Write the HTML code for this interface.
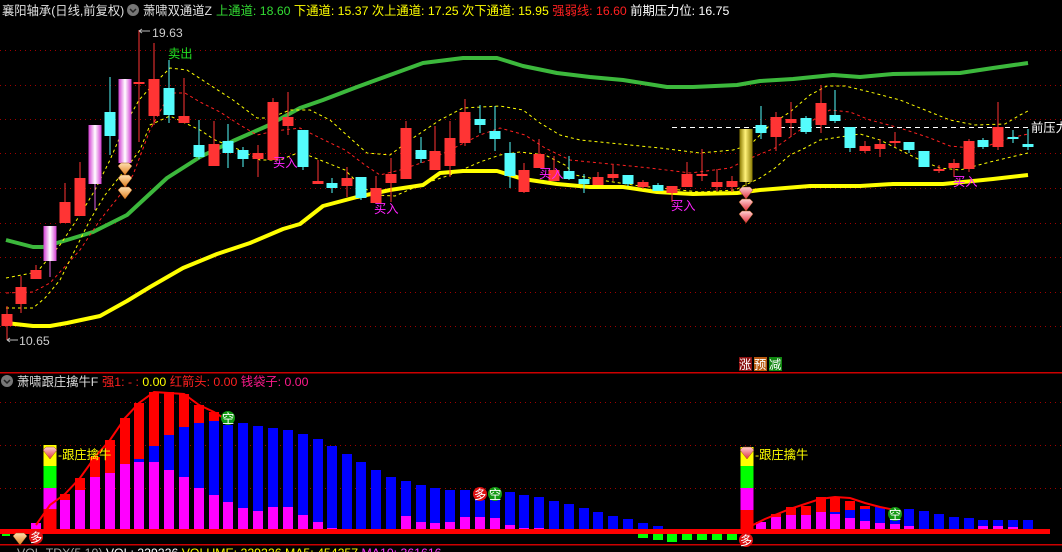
<!DOCTYPE html>
<html><head><meta charset="utf-8">
<style>
html,body{margin:0;padding:0;background:#000;width:1062px;height:552px;overflow:hidden}
svg{display:block}
text{font-family:"Liberation Sans","Noto Sans CJK SC",sans-serif;font-size:12.3px}
</style></head>
<body>
<svg id="s" width="1062" height="552" viewBox="0 0 1062 552" xmlns="http://www.w3.org/2000/svg">
<defs>
<linearGradient id="pk" x1="0" x2="1" y1="0" y2="0">
<stop offset="0" stop-color="#d23cd2"/><stop offset="0.5" stop-color="#ffffff"/><stop offset="1" stop-color="#d23cd2"/></linearGradient>
<linearGradient id="gd" x1="0" x2="1" y1="0" y2="0">
<stop offset="0" stop-color="#8a7a00"/><stop offset="0.45" stop-color="#fff27a"/><stop offset="1" stop-color="#8a7a00"/></linearGradient>
<linearGradient id="dmo" x1="0" x2="0" y1="0" y2="1"><stop offset="0" stop-color="#ffe0b0"/><stop offset="1" stop-color="#e08020"/></linearGradient>
<linearGradient id="dmr" x1="0" x2="0" y1="0" y2="1"><stop offset="0" stop-color="#ffd0d0"/><stop offset="1" stop-color="#e03040"/></linearGradient>
</defs>
<g id="grid"></g>
<g id="lines"></g>
<g id="candles"></g>
<g id="low"></g>
<!-- header -->
<text x="2" y="15" fill="#e0e0e0">襄阳轴承(日线,前复权)</text>
<circle cx="133" cy="10" r="6" fill="#777"/><path d="M130 9 l3 3 l3 -3" stroke="#222" stroke-width="1.5" fill="none"/>
<text x="143" y="15" fill="#e0e0e0">萧啸双通道Z</text>
<text x="216" y="15"><tspan fill="#33dd33">上通道: 18.60 </tspan><tspan fill="#ffff00">下通道: 15.37 次上通道: 17.25 次下通道: 15.95 </tspan><tspan fill="#ff2020">强弱线: 16.60 </tspan><tspan fill="#ffffff">前期压力位: 16.75</tspan></text>
<!-- price labels -->
<path d="M139 31 L150 31 M139 31 l3 -2 M139 31 l3 2" stroke="#bbb" stroke-width="1"/>
<text x="152" y="37" fill="#cccccc" font-size="12">19.63</text>
<path d="M7 340 L18 340 M7 340 l3 -2 M7 340 l3 2" stroke="#bbb" stroke-width="1"/>
<text x="19" y="345" fill="#cccccc" font-size="12">10.65</text>
<text x="168" y="58" fill="#22dd22">卖出</text>
<g fill="#ff22ff">
<text x="273" y="167">买入</text><text x="374" y="213">买入</text><text x="539" y="178">买入</text><text x="671" y="210">买入</text><text x="953" y="186">买入</text>
</g>
<text x="1031" y="132" fill="#ffffff">前压力</text>
<!-- 涨预减 -->
<rect x="739" y="357" width="13" height="14" fill="#8b1010"/><text x="739" y="369" fill="#fff" font-size="12">涨</text>
<rect x="754" y="357" width="13" height="14" fill="#b85a10"/><text x="754" y="369" fill="#fff" font-size="12">预</text>
<rect x="769" y="357" width="13" height="14" fill="#118811"/><text x="769" y="369" fill="#fff" font-size="12">减</text>
<rect x="0" y="372" width="1062" height="1.5" fill="#cc0000"/>
<circle cx="7" cy="381" r="6" fill="#777"/><path d="M4 380 l3 3 l3 -3" stroke="#222" stroke-width="1.5" fill="none"/>
<text x="17" y="386" fill="#dddddd">萧啸跟庄擒牛F</text>
<text x="102" y="386"><tspan fill="#ff2020">强1: - : </tspan><tspan fill="#ffff00">0.00 </tspan><tspan fill="#ff2020">红箭头: 0.00 </tspan><tspan fill="#ff1a8c">钱袋子: 0.00</tspan></text>
<rect x="0" y="544" width="1062" height="1.5" fill="#cc0000"/>
<text x="17" y="557" fill="#aaaaaa">VOL-TDX(5,10) <tspan fill="#fff">VOL: 229226 </tspan><tspan fill="#ffff00">VOLUME: 229226 MA5: 454257 </tspan><tspan fill="#ff33ff">MA10: 361616</tspan></text>
<g id="top"></g>
<text x="58" y="459" fill="#ffff00">-跟庄擒牛</text>
<text x="755" y="459" fill="#ffff00">-跟庄擒牛</text>
</svg>
<script>
var NS="http://www.w3.org/2000/svg";
function el(p,t,a){var e=document.createElementNS(NS,t);for(var k in a)e.setAttribute(k,a[k]);document.getElementById(p).appendChild(e);return e;}
[50,85,119,153,188,223,257,292,326,402,445,488].forEach(function(y){el('grid','line',{x1:0,x2:1062,y1:y+.5,y2:y+.5,stroke:'#a00000','stroke-dasharray':'1 4'});});
function pl(pts,st,w,da){el('lines','polyline',{points:pts.map(function(p){return p.join(',')}).join(' '),fill:'none',stroke:st,'stroke-width':w,'stroke-dasharray':da||'none','stroke-linejoin':'round'});}
pl([[6,240],[33,247],[43,247],[67,240],[93,232],[127,215],[167,178],[200,157],[233,141],[267,126],[300,108],[323,100],[357,87],[390,75],[423,63],[463,58],[497,58],[523,66],[557,73],[590,77],[623,80],[667,87],[693,87],[737,85],[760,81],[793,79],[833,75],[860,77],[893,74],[960,73],[993,68],[1028,63]],'#3cb83c',4);
pl([[6,323],[33,326],[50,326],[67,323],[100,316],[127,301],[150,287],[183,268],[217,254],[250,243],[283,229],[300,224],[323,206],[357,197],[390,190],[423,185],[440,173],[463,171],[497,171],[523,179],[557,184],[590,187],[623,187],[657,192],[693,194],[737,193],[760,190],[810,186],[860,186],[893,184],[943,184],[993,179],[1028,175]],'#ffff00',4);
pl([[6,278],[37,272],[60,245],[80,215],[95,190],[110,160],[125,125],[139,100],[150,88],[170,68],[187,70],[210,85],[233,100],[257,118],[270,118],[290,110],[310,110],[330,120],[350,138],[367,153],[390,155],[410,140],[440,120],[463,108],[500,106],[523,110],[540,123],[560,135],[580,140],[620,144],[660,148],[700,153],[733,150],[750,145],[770,125],[790,112],[810,95],[827,86],[845,86],[870,92],[900,100],[930,112],[950,120],[975,125],[1005,124],[1020,115],[1028,111]],'#ffff00',1,'3 3');
pl([[6,293],[33,292],[50,283],[80,250],[100,220],[120,195],[133,175],[150,130],[170,93],[185,93],[200,102],[220,112],[240,125],[257,135],[275,131],[300,128],[320,138],[345,150],[365,165],[380,175],[400,170],[430,160],[460,145],[480,135],[500,128],[525,135],[545,148],[570,160],[600,163],[650,168],[690,173],[730,168],[746,160],[775,148],[800,130],[820,115],[830,110],[850,112],[870,120],[900,128],[930,138],[950,146],[970,148],[990,145],[1010,138],[1028,134]],'#ff2020',1,'3 3');
pl([[6,308],[33,308],[45,298],[60,280],[75,250],[90,220],[105,195],[125,170],[140,150],[150,125],[170,116],[200,130],[215,140],[240,150],[260,160],[280,160],[300,152],[320,160],[345,170],[360,185],[375,195],[395,196],[420,185],[450,175],[480,162],[500,155],[520,152],[545,155],[565,165],[575,175],[600,180],[640,186],[700,192],[735,190],[760,178],[775,168],[790,155],[805,148],[820,140],[860,134],[880,140],[900,150],[920,160],[940,168],[960,170],[990,162],[1028,153]],'#ffff00',1,'3 3');
el('lines','line',{x1:672,x2:1028,y1:127.5,y2:127.5,stroke:'#fff','stroke-dasharray':'5 4'});
var C=[[7,'r',314,326,306,340],[21,'r',287,304,276,313],[36,'r',270,279,265,279],[50,'p',226,261,226,277],[65,'r',202,223,183,223],[80,'r',178,216,162,216],[95,'p',125,184,125,210],[110,'c',112,136,77,155],[125,'p',79,163,79,163],[139,'r',82,84,30,142],[154,'r',79,116,43,125],[169,'c',88,115,60,123],[184,'r',116,123,78,123],[199,'c',145,157,120,159],[214,'r',144,166,121,166],[228,'c',141,153,124,168],[243,'c',150,159,147,167],[258,'r',153,159,145,177],[273,'r',102,160,98,160],[288,'r',117,126,92,135],[303,'c',130,167,130,170],[318,'r',181,184,160,184],[332,'c',183,188,178,193],[347,'r',178,186,167,197],[361,'c',177,198,177,200],[376,'r',188,203,176,203],[391,'r',174,183,158,202],[406,'r',128,179,121,179],[421,'c',150,159,137,163],[435,'r',151,170,126,170],[450,'r',138,166,121,177],[465,'r',112,143,99,146],[480,'c',119,125,105,133],[495,'c',131,139,106,151],[510,'c',153,176,142,188],[524,'r',170,192,163,193],[539,'r',154,168,139,168],[554,'r',170,181,156,181],[569,'c',171,179,156,180],[584,'c',179,184,174,193],[598,'r',177,185,172,185],[613,'r',174,178,165,181],[628,'c',175,184,175,186],[643,'r',182,187,180,189],[658,'c',185,191,183,191],[672,'r',186,193,186,202],[687,'r',174,187,162,187],[702,'r',174,176,149,181],[717,'r',182,187,169,191],[732,'r',181,187,176,192],[746,'g',129,182,129,186],[761,'c',125,133,106,139],[776,'r',117,137,112,151],[791,'r',119,123,102,137],[806,'c',118,132,116,134],[821,'r',103,125,85,133],[835,'c',115,121,90,123],[850,'c',127,148,127,152],[865,'r',146,151,141,153],[880,'r',144,149,139,157],[895,'r',141,143,132,147],[909,'c',142,150,142,153],[924,'c',151,167,151,167],[939,'r',169,171,165,173],[954,'r',163,168,159,177],[969,'r',141,169,139,172],[983,'c',140,147,138,149],[998,'r',127,147,102,150],[1013,'c',137,139,130,143],[1028,'c',144,147,129,150]];
var col={r:'#ff3434',c:'#54fcfc',p:'url(#pk)',g:'url(#gd)'};
C.forEach(function(d){var x=d[0],wc=d[1]=='c'?'#54fcfc':(d[1]=='r'?'#ff3434':(d[1]=='g'?'#c8b400':'#e060e0'));
el('candles','rect',{x:x-.5,y:d[4],width:1,height:d[5]-d[4],fill:wc});
var w=(d[1]=='p'||d[1]=='g')?13:11;var h=Math.max(d[3]-d[2],1);
el('candles','rect',{x:x-w/2,y:d[2],width:w,height:h,fill:col[d[1]]});});
function dia(cx,y,f){el('top','path',{d:'M'+(cx-7)+' '+(y+3)+' L'+(cx-4)+' '+y+' L'+(cx+4)+' '+y+' L'+(cx+7)+' '+(y+3)+' L'+cx+' '+(y+12)+' Z',fill:f,stroke:'#a05010','stroke-width':.5});}
[163,175,187].forEach(function(y){dia(125,y,'url(#dmo)');});
[187,199,211].forEach(function(y){dia(746,y,'url(#dmr)');});
var B=530;var Mg='#ff00ff',Bl='#0000ff',Rd='#ff0000';
function bar(x,segs,w){w=w||10;segs.forEach(function(s){el('low','rect',{x:x-w/2,y:s[1],width:w,height:s[2]-s[1],fill:s[0]});});}
bar(36,[[Mg,523,B]]);
bar(50,[['#ffff00',445,466],['#00ff00',466,488],[Mg,488,509],[Rd,509,B]],13);
var L=[[65,494,500],[80,478,490],[95,457,477],[110,440,473],[125,418,464]];
L.forEach(function(d){bar(d[0],[[Rd,d[1],d[2]],[Mg,d[2],B]]);});
var L2=[[139,403,459,462],[154,392,446,462],[169,392,435,470],[184,394,427,477],[199,405,423,488],[214,412,421,495]];
L2.forEach(function(d){bar(d[0],[[Rd,d[1],d[2]],[Bl,d[2],d[3]],[Mg,d[3],B]]);});
var L3=[[228,425,502],[243,423,508],[258,426,511],[273,428,507],[288,430,507],[303,434,515],[318,439,522],[332,446,528],[347,454,B],[361,462,B],[376,470,B],[391,477,B],[406,481,516],[421,485,522],[435,488,523],[450,490,522],[465,490,517],[480,500,517],[495,500,518],[510,492,525],[524,495,528],[539,497,528],[554,501,B],[569,504,B],[584,508,B],[598,512,B],[613,516,B],[628,519,B],[643,523,B],[658,526,B]];
L3.forEach(function(d){bar(d[0],[[Bl,d[1],d[2]],[Mg,d[2],B]]);});
[[643,533,538],[658,533,540],[672,533,542],[687,533,540],[702,533,540],[717,533,540],[732,533,540]].forEach(function(d){bar(d[0],[['#00ff00',d[1],d[2]]]);});
bar(747,[['#ffff00',447,466],['#00ff00',466,488],[Mg,488,510],[Rd,510,B]],13);
var R=[[761,524,524,522],[776,514,517,517],[791,507,515,515],[806,506,515,515],[821,497,512,512],[835,497,512,514],[850,501,510,518],[865,506,509,521],[880,507,507,523]];
R.forEach(function(d){bar(d[0],[[Rd,d[1],d[2]],[Bl,d[2],d[3]],[Mg,d[3],B]]);});
[[895,514,524],[909,509,526],[924,511,B],[939,514,B],[954,517,B],[969,518,B],[983,520,526],[998,520,526],[1013,520,527],[1028,520,B]].forEach(function(d){bar(d[0],[[Bl,d[1],d[2]],[Mg,d[2],B]]);});
el('low','polyline',{points:'36,525 50,505 65,494 80,478 95,457 110,440 125,418 139,403 154,392 184,394 199,405 214,412 222,417',fill:'none',stroke:Rd,'stroke-width':2});
el('low','polyline',{points:'749,527 765,519 790,509 820,499 835,497 850,498 865,503 880,507 895,510',fill:'none',stroke:Rd,'stroke-width':2});
el('low','rect',{x:0,y:529,width:1050,height:5,fill:Rd});
el('low','rect',{x:2,y:534,width:8,height:2,fill:'#00ff00'});
dia(50,447,'url(#dmr)');dia(747,447,'url(#dmr)');dia(20,533,'url(#dmo)');
function circ(x,y,f,t){el('top','circle',{cx:x,cy:y,r:7,fill:f});var e=el('top','text',{x:x-6,y:y+5,fill:'#fff','font-size':'12'});e.textContent=t;}
circ(228,418,'#119911','空');circ(480,494,'#dd1111','多');circ(495,494,'#119911','空');circ(895,514,'#119911','空');circ(36,537,'#dd1111','多');circ(746,540,'#dd1111','多');
</script>
</body></html>
